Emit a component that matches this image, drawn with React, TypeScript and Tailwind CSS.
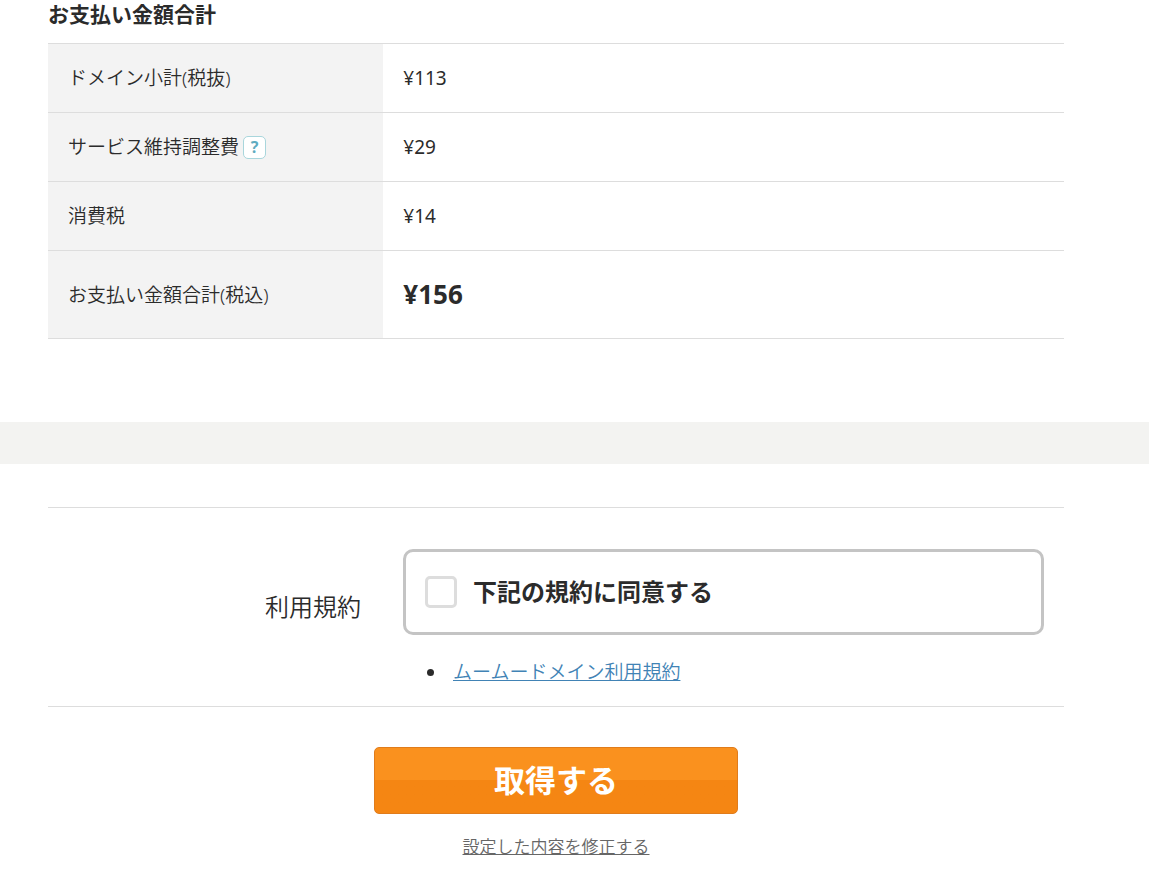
const rows = [
  { label: 'ドメイン小計(税抜)', value: '¥113' },
  { label: 'サービス維持調整費', value: '¥29', help: true },
  { label: '消費税', value: '¥14' },
]

function HelpButton() {
  return (
    <button
      type="button"
      className="ml-1 flex size-[23px] items-center justify-center rounded-[5px] border border-[#a9d6dc] bg-white text-base font-bold text-[#5fabc0]"
    >
      ?
    </button>
  )
}

function PaymentTable() {
  return (
    <table className="mt-3.5 w-full border-collapse border-y border-[#ddd] text-left text-[19px] leading-7">
      <tbody>
        {rows.map((row) => (
          <tr key={row.label} className="border-b border-[#ddd]">
            <th scope="row" className="w-[33%] bg-[#f3f3f3] px-5 py-5 font-[350]">
              <div className="flex items-center">
                {row.label}
                {row.help && <HelpButton />}
              </div>
            </th>
            <td className="px-5 py-5">{row.value}</td>
          </tr>
        ))}
        <tr>
          <th scope="row" className="bg-[#f3f3f3] px-5 py-5 font-[350]">
            お支払い金額合計(税込)
          </th>
          <td className="px-5 py-5 text-[26px] leading-[47px] font-bold">¥156</td>
        </tr>
      </tbody>
    </table>
  )
}

function Terms() {
  return (
    <section className="mr-[85px] ml-12 mt-[43px] flex border-y border-[#ddd] pt-[41px] pr-5 pb-5">
      <h2 className="w-[355px] shrink-0 pt-10 pr-[42px] text-right text-2xl leading-9 font-[350]">利用規約</h2>
      <div className="grow">
        <label className="flex items-center gap-4 rounded-[10px] border-3 border-[#c4c4c4] px-[19px] py-6 text-2xl leading-8 font-bold">
          <input
            type="checkbox"
            className="size-8 appearance-none rounded-[5px] border-3 border-[#ddd] bg-white checked:bg-[#5fabc0]"
          />
          下記の規約に同意する
        </label>
        <ul className="mt-[23px] list-disc pl-11 text-[19px] leading-7">
          <li className="pl-1.5">
            <a href="#terms" className="font-[350] text-[#4183b5] underline">
              ムームードメイン利用規約
            </a>
          </li>
        </ul>
      </div>
    </section>
  )
}

export default function App() {
  return (
    <main className="bg-white font-['Noto_Sans','Noto_Sans_CJK_JP',sans-serif] text-[#2b2b2b]">
      <section className="mr-[85px] ml-12">
        <h2 className="text-[21px] leading-[29px] font-bold">お支払い金額合計</h2>
        <PaymentTable />
      </section>
      <div className="mt-[83px] h-[42px] bg-[#f3f3f1]" />
      <Terms />
      <div className="mr-[85px] ml-12 mt-10 flex flex-col items-center">
        <button
          type="button"
          className="h-[67px] w-[364px] rounded-[5px] border border-[#e07c1c] bg-linear-to-b from-[#fa911e] from-50% to-[#f58613] to-50% text-[31px] font-bold text-white"
        >
          取得する
        </button>
        <a href="#edit" className="mt-[21px] text-[17px] leading-6 font-[350] text-[#666] underline">
          設定した内容を修正する
        </a>
      </div>
    </main>
  )
}
